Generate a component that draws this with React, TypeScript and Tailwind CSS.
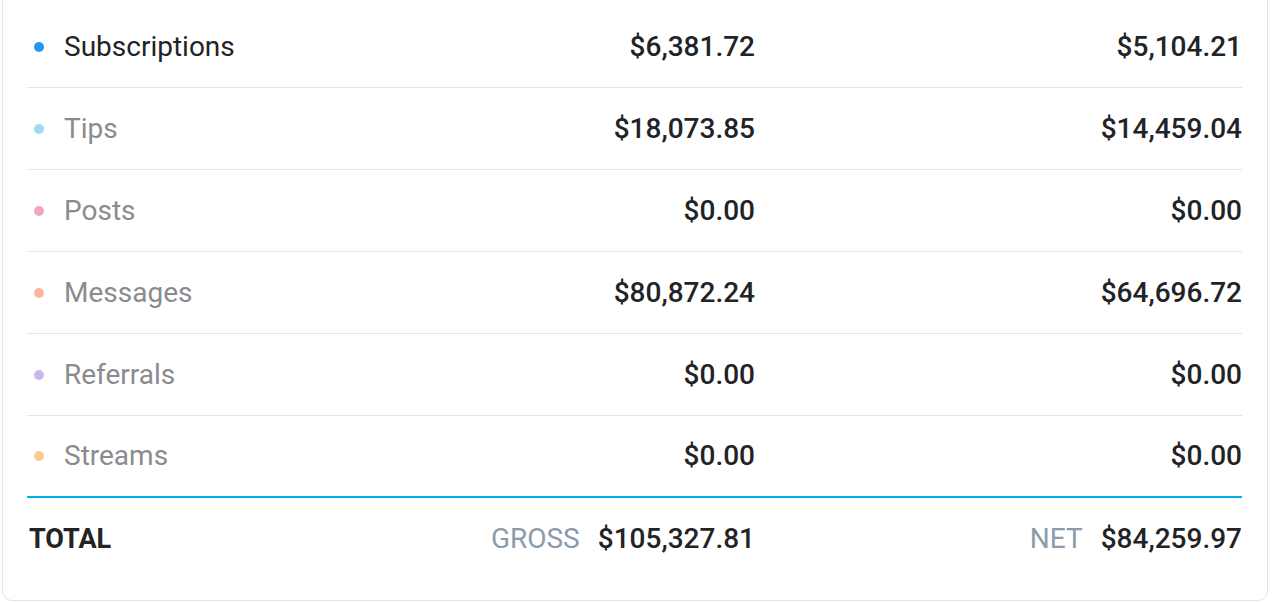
const rows = [
  { label: "Subscriptions", dot: "bg-[#2196f3]", gross: "$6,381.72", net: "$5,104.21", active: true },
  { label: "Tips", dot: "bg-[#9ddcea]", gross: "$18,073.85", net: "$14,459.04" },
  { label: "Posts", dot: "bg-[#f5a3c0]", gross: "$0.00", net: "$0.00" },
  { label: "Messages", dot: "bg-[#f9b7a0]", gross: "$80,872.24", net: "$64,696.72" },
  { label: "Referrals", dot: "bg-[#cbb8e8]", gross: "$0.00", net: "$0.00" },
  { label: "Streams", dot: "bg-[#fbcb8e]", gross: "$0.00", net: "$0.00", last: true },
];

export default function App() {
  return (
    <div className="h-[602px] overflow-hidden bg-white pl-[2px] pr-[4px] font-['Roboto',sans-serif]">
      <div className="-mt-[14px] rounded-[10px] border border-[#e2e4e7] pl-[24px] pr-[25px] pt-[19px] pb-[20px]">
        {rows.map((r) => (
          <div
            key={r.label}
            className={`grid grid-cols-[1fr_487px_487px] items-center border-b ${
              r.last ? "h-[82px] border-b-2 border-[#00aff0]" : "h-[82px] border-[#e3e5e8]"
            }`}
          >
            <div className="flex items-center">
              <span className={`ml-[7px] h-[10px] w-[10px] rounded-full ${r.dot}`} />
              <span className={`ml-[20px] text-[28px] ${r.active ? "text-[#222326]" : "text-[#8a8b8e]"}`}>
                {r.label}
              </span>
            </div>
            <div className="text-right text-[28px] font-medium text-[#222326]">{r.gross}</div>
            <div className="text-right text-[28px] font-medium text-[#222326]">{r.net}</div>
          </div>
        ))}
        <div className="grid h-[82px] grid-cols-[1fr_487px_487px] items-center">
          <div className="pl-[2px] text-[27px] font-bold text-[#222326]">TOTAL</div>
          <div className="flex items-baseline justify-end gap-[18px]">
            <span className="text-[28px] text-[#8a9bab]">GROSS</span>
            <span className="text-[28px] font-medium text-[#222326]">$105,327.81</span>
          </div>
          <div className="flex items-baseline justify-end gap-[18px]">
            <span className="text-[28px] text-[#8a9bab]">NET</span>
            <span className="text-[28px] font-medium text-[#222326]">$84,259.97</span>
          </div>
        </div>
      </div>
    </div>
  );
}
